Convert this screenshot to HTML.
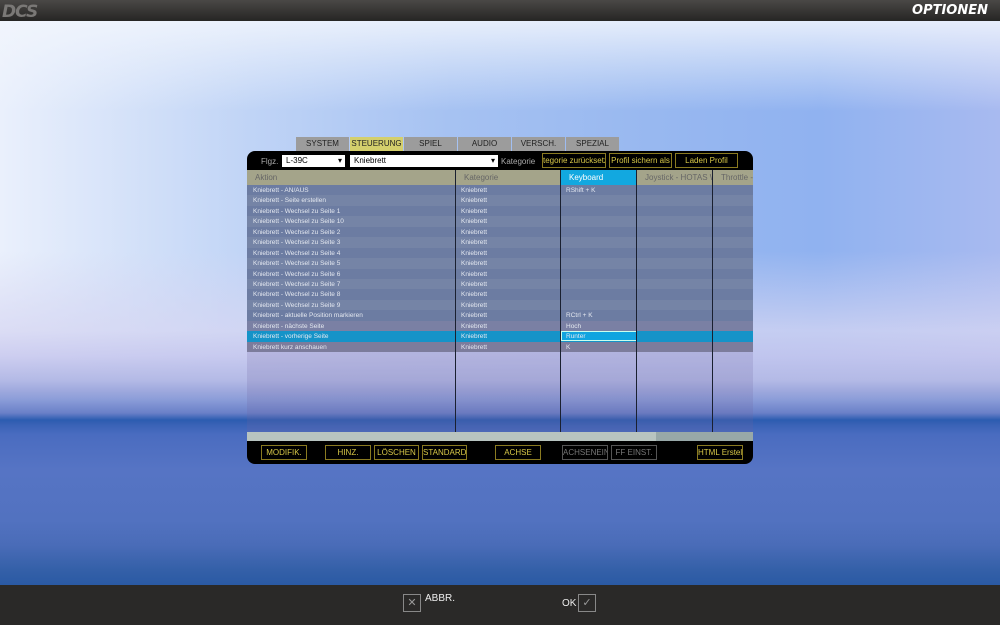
<!DOCTYPE html>
<html><head><meta charset="utf-8"><style>
*{margin:0;padding:0;box-sizing:border-box}
body{width:1000px;height:625px;overflow:hidden;position:relative;font-family:"Liberation Sans","DejaVu Sans",sans-serif;
background:linear-gradient(180deg,#eef2fa 20px,#c8d4f4 300px,#b4bae6 380px,#a0aade 390px,#8a9cd8 400px,#6a80c8 413px,#2c5cb0 420px,#3a62b6 425px,#4a6cc0 435px,#5674c4 470px,#5272c0 520px,#4a6cb8 545px,#3460a8 570px,#2a5aa4 585px)}
.sky{position:absolute;left:0;top:21px;width:1000px;height:359px;
background:linear-gradient(180deg,rgba(242,246,253,.85) 0,rgba(242,246,253,0) 90px,rgba(220,218,242,0) 230px,rgba(214,214,242,.75) 310px,rgba(200,200,238,.85) 335px,rgba(180,186,230,1) 359px),
linear-gradient(90deg,#eaf0fc 0,#c0d4f6 25%,#a6c2f2 45%,#98b8f0 65%,#90b2f0 82%,#a8baf0 100%)}
.top{position:absolute;left:0;top:0;width:1000px;height:21px;background:linear-gradient(#4a4846,#262524);}
.logo{position:absolute;left:2px;top:2px;font:italic bold 17px "DejaVu Sans",sans-serif;color:#7a7876;letter-spacing:-1px}
.opt{position:absolute;right:12px;top:3px;font:italic bold 13px "DejaVu Sans",sans-serif;color:#fff}
.bot{position:absolute;left:0;top:585px;width:1000px;height:40px;background:#2a2928}
.bx{position:absolute;width:18px;height:18px;border:1px solid #888;color:#999;font-size:11px;text-align:center;line-height:16px}
.bt{position:absolute;color:#eee;font-size:10px}
.tab{position:absolute;top:137px;height:14px;width:53px;background:#9c9c9c;font-size:8px;color:#222;text-align:center;line-height:14px}
.panel{position:absolute;left:247px;top:151px;width:506px;height:313px;border-radius:8px;overflow:hidden}
.tb{position:absolute;left:0;top:0;width:506px;height:19px;background:#000}
.bb{position:absolute;left:0;top:290px;width:506px;height:23px;background:#000}
.sel{position:absolute;top:4px;height:12px;background:#fff;font-size:8px;line-height:12px;padding-left:4px;color:#000}
.sel:after{content:"▾";position:absolute;right:3px;top:0;font-size:8px}
.yb{position:absolute;border:1px solid #8a7a20;color:#d8c848;font-size:8px;text-align:center;white-space:nowrap;overflow:hidden}
.lbl{position:absolute;color:#aaa;font-size:8px}
.hdr{position:absolute;top:19px;height:15px;background:#a4a48a;color:#666;font-size:8px;line-height:15px;padding-left:8px;white-space:nowrap;overflow:hidden}
.rows{position:absolute;left:0;top:34px;width:506px;height:247px;background:rgba(110,100,160,.2)}
.r{height:10.45px;font-size:6.5px;color:#e4e8f0;line-height:11.5px;position:relative;white-space:nowrap}
.r span{position:absolute}
.col{position:absolute;top:19px;height:262px;width:1px;background:#1a2030}
.sb{position:absolute;left:0;top:281px;width:506px;height:9px;background:#b8c4c0}
</style></head><body>
<div class="sky"></div>
<div class="top"><div class="logo">DCS</div><div class="opt">OPTIONEN</div></div>

<div class="tab" style="left:296px">SYSTEM</div>
<div class="tab" style="left:350px;background:#d4cf6c">STEUERUNG</div>
<div class="tab" style="left:404px">SPIEL</div>
<div class="tab" style="left:458px">AUDIO</div>
<div class="tab" style="left:512px">VERSCH.</div>
<div class="tab" style="left:566px">SPEZIAL</div>

<div class="panel">
<div class="tb"></div><div class="bb"></div>
<div class="lbl" style="left:14px;top:6px">Flgz.</div>
<div class="sel" style="left:35px;width:63px">L-39C</div>
<div class="sel" style="left:103px;width:148px">Kniebrett</div>
<div class="lbl" style="left:254px;top:6px">Kategorie</div>
<div class="yb" style="left:295px;top:2px;width:64px;height:15px;line-height:13px">tegorie zurücksetz</div>
<div class="yb" style="left:362px;top:2px;width:63px;height:15px;line-height:13px">Profil sichern als</div>
<div class="yb" style="left:428px;top:2px;width:63px;height:15px;line-height:13px">Laden Profil</div>

<div class="hdr" style="left:0;width:209px">Aktion</div>
<div class="hdr" style="left:209px;width:105px">Kategorie</div>
<div class="hdr" style="left:314px;width:76px;background:#12a8e0;color:#fff">Keyboard</div>
<div class="hdr" style="left:390px;width:76px">Joystick - HOTAS Wa</div>
<div class="hdr" style="left:466px;width:40px">Throttle -</div>

<div class="rows">
<div class="r" style="background:#6c7ca2"><span style="left:6px">Kniebrett - AN/AUS</span><span style="left:214px">Kniebrett</span><span style="left:319px">RShift + K</span></div>
<div class="r" style="background:#7584a6"><span style="left:6px">Kniebrett - Seite erstellen</span><span style="left:214px">Kniebrett</span></div>
<div class="r" style="background:#6c7ca2"><span style="left:6px">Kniebrett - Wechsel zu Seite 1</span><span style="left:214px">Kniebrett</span></div>
<div class="r" style="background:#7584a6"><span style="left:6px">Kniebrett - Wechsel zu Seite 10</span><span style="left:214px">Kniebrett</span></div>
<div class="r" style="background:#6c7ca2"><span style="left:6px">Kniebrett - Wechsel zu Seite 2</span><span style="left:214px">Kniebrett</span></div>
<div class="r" style="background:#7584a6"><span style="left:6px">Kniebrett - Wechsel zu Seite 3</span><span style="left:214px">Kniebrett</span></div>
<div class="r" style="background:#6c7ca2"><span style="left:6px">Kniebrett - Wechsel zu Seite 4</span><span style="left:214px">Kniebrett</span></div>
<div class="r" style="background:#7584a6"><span style="left:6px">Kniebrett - Wechsel zu Seite 5</span><span style="left:214px">Kniebrett</span></div>
<div class="r" style="background:#6c7ca2"><span style="left:6px">Kniebrett - Wechsel zu Seite 6</span><span style="left:214px">Kniebrett</span></div>
<div class="r" style="background:#7584a6"><span style="left:6px">Kniebrett - Wechsel zu Seite 7</span><span style="left:214px">Kniebrett</span></div>
<div class="r" style="background:#6c7ca2"><span style="left:6px">Kniebrett - Wechsel zu Seite 8</span><span style="left:214px">Kniebrett</span></div>
<div class="r" style="background:#7584a6"><span style="left:6px">Kniebrett - Wechsel zu Seite 9</span><span style="left:214px">Kniebrett</span></div>
<div class="r" style="background:#6c7ca2"><span style="left:6px">Kniebrett - aktuelle Position markieren</span><span style="left:214px">Kniebrett</span><span style="left:319px">RCtrl + K</span></div>
<div class="r" style="background:#7a80a4"><span style="left:6px">Kniebrett - nächste Seite</span><span style="left:214px">Kniebrett</span><span style="left:319px">Hoch</span></div>
<div class="r" style="background:#1593c8"><span style="left:6px">Kniebrett - vorherige Seite</span><span style="left:214px">Kniebrett</span><span style="left:314px;width:76px;height:10px;background:#10a4e0;border:1px solid #cfe;padding-left:4px;line-height:9px">Runter</span></div>
<div class="r" style="background:#7c7c9c"><span style="left:6px">Kniebrett kurz anschauen</span><span style="left:214px">Kniebrett</span><span style="left:319px">K</span></div>
</div>
<div class="col" style="left:208px"></div>
<div class="col" style="left:313px"></div>
<div class="col" style="left:389px"></div>
<div class="col" style="left:465px"></div>
<div class="sb"><div style="position:absolute;left:409px;top:0;width:97px;height:9px;background:#98a8a8"></div></div>

<div class="yb" style="left:14px;top:294px;width:46px;height:15px;line-height:13px">MODIFIK.</div>
<div class="yb" style="left:78px;top:294px;width:46px;height:15px;line-height:13px">HINZ.</div>
<div class="yb" style="left:127px;top:294px;width:45px;height:15px;line-height:13px">LÖSCHEN</div>
<div class="yb" style="left:175px;top:294px;width:45px;height:15px;line-height:13px">STANDARD</div>
<div class="yb" style="left:248px;top:294px;width:46px;height:15px;line-height:13px">ACHSE</div>
<div class="yb" style="left:315px;top:294px;width:46px;height:15px;line-height:13px;border-color:#555;color:#777">ACHSENEINST</div>
<div class="yb" style="left:364px;top:294px;width:46px;height:15px;line-height:13px;border-color:#555;color:#777">FF EINST.</div>
<div class="yb" style="left:450px;top:294px;width:46px;height:15px;line-height:13px">HTML Erstellen</div>
</div>

<div class="bot">
<div class="bx" style="left:403px;top:9px">✕</div><div class="bt" style="left:425px;top:8px">ABBR.</div>
<div class="bt" style="left:562px;top:13px">OK</div><div class="bx" style="left:578px;top:9px">✓</div>
</div>
</body></html>
